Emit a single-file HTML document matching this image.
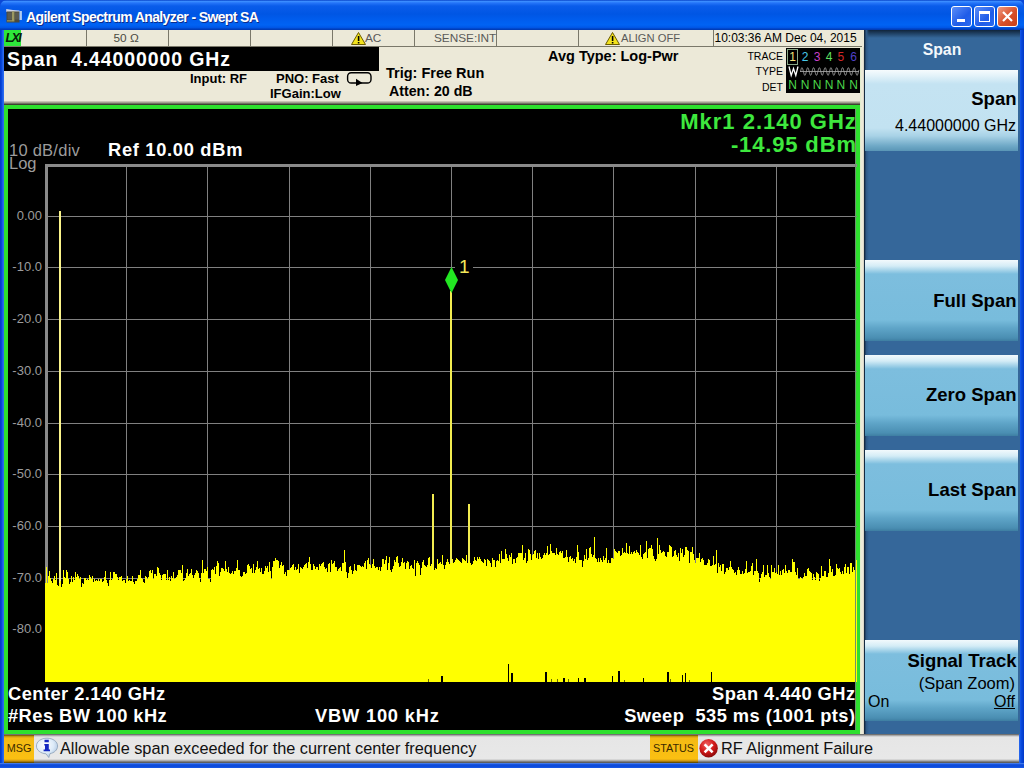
<!DOCTYPE html>
<html><head><meta charset="utf-8">
<style>
*{margin:0;padding:0;box-sizing:border-box}
html,body{width:1024px;height:768px;overflow:hidden;background:#0A47D6;font-family:"Liberation Sans", sans-serif}
.abs{position:absolute}
#title{left:0;top:0;width:1024px;height:30px;background:linear-gradient(#0843C8 0px,#3A8CFF 1.5px,#2474F8 3px,#0A5CEA 6px,#0056E4 14px,#005DEE 20px,#0063F4 25px,#0056E6 27.5px,#0040C0 29px,#0038B0 30px);border-radius:7px 7px 0 0}
#title .t{left:26px;top:9px;color:#fff;font-weight:bold;font-size:14px;letter-spacing:-0.62px;text-shadow:1px 1px 0 #0A2C8C;white-space:nowrap}
.wb{top:6px;width:21px;height:21px;border:1px solid #fff;border-radius:3px;background:linear-gradient(135deg,#5C8EF8,#1F5CE8 60%,#2A6AF0)}
#frameL{left:0;top:30px;width:4px;height:738px;background:linear-gradient(90deg,#0038C8,#0A4CE0 2px,#2A6AF0 3px)}
#frameR{left:1019px;top:30px;width:5px;height:738px;background:linear-gradient(90deg,#2A6AF0,#0A4CE0 2px,#0038C8)}
#frameB{left:0;top:763px;width:1024px;height:5px;background:linear-gradient(#6A9AF0,#1A56E0 1px,#0A48D8 3px,#1A5AE8)}
#beige{left:4px;top:30px;width:860px;height:74px;background:#ECE9D8}
#srow{left:4px;top:30px;width:860px;height:17px;background:#ECE9D8}
.dv{top:30px;width:1px;height:17px;background:#7A786A}
.st{top:31px;font-size:11.8px;color:#5A5A58;white-space:nowrap;line-height:15px}
#spanbox{left:4px;top:47px;width:375px;height:24px;background:#000;color:#fff;font-weight:bold;font-size:19.5px;letter-spacing:0.9px;line-height:24px;padding-left:3px;white-space:pre}
.bt{font-weight:bold;color:#000;white-space:nowrap;position:absolute;line-height:1}
#shadow{left:4px;top:100.5px;width:856px;height:4.5px;background:linear-gradient(#D8D4C4,#A8A596 35%,#5A5A4A 75%,#202818)}
#gframe{left:4px;top:105px;width:856px;height:629px;background:#000;border:4px solid #2EE02E}
#panel{left:864px;top:30px;width:156px;height:704px;background:#35679A}
#panelshade{left:864px;top:30px;width:156px;height:8px;background:linear-gradient(#10243A,#35679A)}
#panelL{left:864px;top:30px;width:5px;height:704px;background:linear-gradient(90deg,#0A1A2A,#1E3A5A 1px,#2E5A88 2.5px,rgba(53,103,154,0) 5px)}
.sk{left:865px;width:153px;height:81px;background:linear-gradient(#F2F9FC 0px,#D4ECF6 6px,#7DBEDE 14px,#78BCDC 60px,#5FA5C8 68px,#4A8EB2 78px,#3E7EA2 81px)}
.sk.sel{background:linear-gradient(#F6FBFD 0px,#E2F2F9 6px,#C4E3F2 14px,#C2E2F1 58px,#A8D2E6 66px,#6EA8C6 76px,#5A96B6 81px)}
.skt{position:absolute;right:1.5px;font-weight:bold;font-size:18.5px;color:#000;white-space:nowrap;line-height:1}
.yl{position:absolute;right:982px;font-size:13px;color:#9C9C9C;line-height:18px;white-space:nowrap}
.gt{position:absolute;font-weight:bold;color:#fff;font-size:18.3px;letter-spacing:0.45px;white-space:pre;line-height:1}
#sbar{left:4px;top:734px;width:1015px;height:29px;background:linear-gradient(#5A5A5A 0px,#8A8A8A 1px,#C8C8C8 2px,#E6E6E6 3.5px,#E8E8E8 25px,#B0B0B0 26.5px,#6A6A6A 28px,#505050 29px)}
.tag{position:absolute;background:linear-gradient(#5A4000 0px,#B88A10 1px,#F4BA14 3px,#FBC012 24px,#C89010 26px,#6A5000 27.5px);color:#3A2A00;font-size:10.8px;line-height:27px;text-align:center}
</style></head><body>
<div id="title" class="abs">
  <svg class="abs" style="left:0;top:0" width="30" height="30" viewBox="0 0 30 30">
    <path d="M6.2 9 L13 10 L19.5 10.5 L19.5 12 L6.2 12 Z" fill="#D0D4E4"/>
    <rect x="6.5" y="11.5" width="13" height="11" fill="#4C4A3C"/>
    <rect x="7.5" y="12.5" width="4.5" height="7" fill="#5A5A50"/>
    <rect x="15" y="12.5" width="4" height="7" fill="#5A5A50"/>
    <rect x="12" y="11.5" width="2.4" height="10" fill="#9C9860"/>
    <rect x="7" y="20" width="5" height="1.6" fill="#8A8658"/>
    <rect x="19.5" y="11" width="2.4" height="9" fill="#B0CCF0"/>
  </svg>
  <div class="abs t">Agilent Spectrum Analyzer - Swept SA</div>
  <div class="abs wb" style="left:951px"><div class="abs" style="left:5px;top:12px;width:8px;height:3px;background:#fff"></div></div>
  <div class="abs wb" style="left:974px"><div class="abs" style="left:4px;top:4px;width:11px;height:11px;border:1px solid #fff;border-top-width:3px"></div></div>
  <div class="abs wb" style="left:997px;background:linear-gradient(135deg,#F09A80,#D8502A 55%,#C84018)">
    <svg class="abs" style="left:3px;top:3px" width="13" height="13"><path d="M2 2 L11 11 M11 2 L2 11" stroke="#fff" stroke-width="2.2"/></svg>
  </div>
</div>
<div id="frameL" class="abs"></div><div id="frameR" class="abs"></div><div id="frameB" class="abs"></div>
<div id="beige" class="abs"></div>
<div id="srow" class="abs"></div>
<div class="abs" style="left:4px;top:30px;width:17px;height:16px;background:#2EE83A"></div>
<div class="abs" style="left:5.5px;top:31px;font-size:12.5px;font-weight:bold;font-style:italic;color:#082008;letter-spacing:-1.6px;line-height:15px">LXI</div>
<div class="abs" style="left:4px;top:46px;width:858px;height:1px;background:#7A786A"></div>
<div class="abs dv" style="left:86px"></div>
<div class="abs dv" style="left:168px"></div>
<div class="abs dv" style="left:250px"></div>
<div class="abs dv" style="left:332px"></div>
<div class="abs dv" style="left:414px"></div>
<div class="abs dv" style="left:496px"></div>
<div class="abs dv" style="left:578px"></div>
<div class="abs dv" style="left:713px"></div>
<div class="abs st" style="left:113.5px;color:#4A4A42">50 &#937;</div>
<svg class="abs" style="left:351px;top:32px" width="15" height="13" viewBox="0 0 15 13"><path d="M7.5 0.5 L14.5 12.5 L0.5 12.5 Z" fill="#F2E21C" stroke="#6A5A00"/><rect x="6.8" y="4" width="1.6" height="5" fill="#000"/><rect x="6.8" y="10" width="1.6" height="1.5" fill="#000"/></svg>
<div class="abs st" style="left:365px">AC</div>
<div class="abs st" style="left:434px">SENSE:INT</div>
<svg class="abs" style="left:605px;top:32px" width="15" height="13" viewBox="0 0 15 13"><path d="M7.5 0.5 L14.5 12.5 L0.5 12.5 Z" fill="#F2E21C" stroke="#6A5A00"/><rect x="6.8" y="4" width="1.6" height="5" fill="#000"/><rect x="6.8" y="10" width="1.6" height="1.5" fill="#000"/></svg>
<div class="abs st" style="left:621px;font-size:11.2px">ALIGN OFF</div>
<div class="abs st" style="left:714.5px;color:#000;font-size:12px;letter-spacing:0px">10:03:36 AM Dec 04, 2015</div>
<div id="spanbox" class="abs">Span  4.44000000 GHz</div>
<div class="bt" style="left:190px;top:72px;font-size:13px">Input: RF</div>
<div class="bt" style="left:276px;top:72px;font-size:13px">PNO: Fast</div>
<div class="bt" style="left:270px;top:87px;font-size:13px">IFGain:Low</div>
<svg class="abs" style="left:346px;top:71px" width="27" height="16" viewBox="0 0 27 16"><rect x="1.6" y="1.8" width="23.4" height="10.2" rx="3.6" fill="none" stroke="#000" stroke-width="1.4"/><path d="M10 7.8 L16.5 11.9 L10 15 Z" fill="#000"/></svg>
<div class="bt" style="left:386px;top:66px;font-size:14.5px">Trig: Free Run</div>
<div class="bt" style="left:389px;top:84px;font-size:14.2px">Atten: 20 dB</div>
<div class="bt" style="left:548px;top:49px;font-size:14.5px">Avg Type: Log-Pwr</div>
<div class="abs" style="left:733px;top:48.5px;width:50px;text-align:right;font-size:10.5px;line-height:15.7px;color:#000">TRACE<br>TYPE<br>DET</div>
<div class="abs" style="left:786px;top:48px;width:75px;height:45px;background:#000"></div>
<div class="abs" style="left:787px;top:49px;width:11px;height:16px;border:1px solid #8AA888"></div>
<div class="abs" style="left:789.2px;top:50px;font-size:12px;line-height:14px;color:#F4E27A">1</div><div class="abs" style="left:788.2px;top:78px;font-size:12px;line-height:14px;color:#4CD84C">N</div><div class="abs" style="left:801.7px;top:50px;font-size:12px;line-height:14px;color:#48C8E8">2</div><div class="abs" style="left:800.7px;top:78px;font-size:12px;line-height:14px;color:#4CD84C">N</div><div class="abs" style="left:813.8px;top:50px;font-size:12px;line-height:14px;color:#C840C8">3</div><div class="abs" style="left:812.8px;top:78px;font-size:12px;line-height:14px;color:#4CD84C">N</div><div class="abs" style="left:825.7px;top:50px;font-size:12px;line-height:14px;color:#60E060">4</div><div class="abs" style="left:824.7px;top:78px;font-size:12px;line-height:14px;color:#4CD84C">N</div><div class="abs" style="left:837.6px;top:50px;font-size:12px;line-height:14px;color:#D02828">5</div><div class="abs" style="left:836.6px;top:78px;font-size:12px;line-height:14px;color:#4CD84C">N</div><div class="abs" style="left:850.3px;top:50px;font-size:12px;line-height:14px;color:#5040C8">6</div><div class="abs" style="left:849.3px;top:78px;font-size:12px;line-height:14px;color:#4CD84C">N</div>
<svg class="abs" style="left:786px;top:64px" width="75" height="14" viewBox="0 0 75 14">
<path d="M3 2.5 L5.2 11.5 L7.5 4.5 L9.8 11.5 L12 2.5" stroke="#fff" fill="none" stroke-width="1.3"/>
<path d="M14 7.5 H73" stroke="#909090" stroke-width="1"/><path d="M14.5 7.5 L14.50 7.50 L14.60 7.09 L14.70 6.68 L14.80 6.29 L14.90 5.90 L15.00 5.54 L15.10 5.20 L15.20 4.89 L15.30 4.60 L15.40 4.35 L15.50 4.14 L15.60 3.97 L15.70 3.84 L15.80 3.75 L15.90 3.71 L16.00 3.71 L16.10 3.75 L16.20 3.84 L16.30 3.97 L16.40 4.14 L16.50 4.35 L16.60 4.60 L16.70 4.89 L16.80 5.20 L16.90 5.54 L17.00 5.90 L17.10 6.29 L17.20 6.68 L17.30 7.09 L17.40 7.50 L17.50 7.91 L17.60 8.32 L17.70 8.71 L17.80 9.10 L17.90 9.46 L18.00 9.80 L18.10 10.11 L18.20 10.40 L18.30 10.65 L18.40 10.86 L18.50 11.03 L18.60 11.16 L18.70 11.25 L18.80 11.29 L18.90 11.29 L19.00 11.25 L19.10 11.16 L19.20 11.03 L19.30 10.86 L19.40 10.65 L19.50 10.40 L19.60 10.11 L19.70 9.80 L19.80 9.46 L19.90 9.10 L20.00 8.71 L20.10 8.32 L20.20 7.91 L20.30 7.50 L20.40 7.09 L20.50 6.68 L20.60 6.29 L20.70 5.90 L20.80 5.54 L20.90 5.20 L21.00 4.89 L21.10 4.60 L21.20 4.35 L21.30 4.14 L21.40 3.97 L21.50 3.84 L21.60 3.75 L21.70 3.71 L21.80 3.71 L21.90 3.75 L22.00 3.84 L22.10 3.97 L22.20 4.14 L22.30 4.35 L22.40 4.60 L22.50 4.89 L22.60 5.20 L22.70 5.54 L22.80 5.90 L22.90 6.29 L23.00 6.68 L23.10 7.09 L23.20 7.50 L23.30 7.91 L23.40 8.32 L23.50 8.71 L23.60 9.10 L23.70 9.46 L23.80 9.80 L23.90 10.11 L24.00 10.40 L24.10 10.65 L24.20 10.86 L24.30 11.03 L24.40 11.16 L24.50 11.25 L24.60 11.29 L24.70 11.29 L24.80 11.25 L24.90 11.16 L25.00 11.03 L25.10 10.86 L25.20 10.65 L25.30 10.40 L25.40 10.11 L25.50 9.80 L25.60 9.46 L25.70 9.10 L25.80 8.71 L25.90 8.32 L26.00 7.91 L26.10 7.50 L26.20 7.09 L26.30 6.68 L26.40 6.29 L26.50 5.90 L26.60 5.54 L26.70 5.20 L26.80 4.89 L26.90 4.60 L27.00 4.35 L27.10 4.14 L27.20 3.97 L27.30 3.84 L27.40 3.75 L27.50 3.71 L27.60 3.71 L27.70 3.75 L27.80 3.84 L27.90 3.97 L28.00 4.14 L28.10 4.35 L28.20 4.60 L28.30 4.89 L28.40 5.20 L28.50 5.54 L28.60 5.90 L28.70 6.29 L28.80 6.68 L28.90 7.09 L29.00 7.50 L29.10 7.91 L29.20 8.32 L29.30 8.71 L29.40 9.10 L29.50 9.46 L29.60 9.80 L29.70 10.11 L29.80 10.40 L29.90 10.65 L30.00 10.86 L30.10 11.03 L30.20 11.16 L30.30 11.25 L30.40 11.29 L30.50 11.29 L30.60 11.25 L30.70 11.16 L30.80 11.03 L30.90 10.86 L31.00 10.65 L31.10 10.40 L31.20 10.11 L31.30 9.80 L31.40 9.46 L31.50 9.10 L31.60 8.71 L31.70 8.32 L31.80 7.91 L31.90 7.50 L32.00 7.09 L32.10 6.68 L32.20 6.29 L32.30 5.90 L32.40 5.54 L32.50 5.20 L32.60 4.89 L32.70 4.60 L32.80 4.35 L32.90 4.14 L33.00 3.97 L33.10 3.84 L33.20 3.75 L33.30 3.71 L33.40 3.71 L33.50 3.75 L33.60 3.84 L33.70 3.97 L33.80 4.14 L33.90 4.35 L34.00 4.60 L34.10 4.89 L34.20 5.20 L34.30 5.54 L34.40 5.90 L34.50 6.29 L34.60 6.68 L34.70 7.09 L34.80 7.50 L34.90 7.91 L35.00 8.32 L35.10 8.71 L35.20 9.10 L35.30 9.46 L35.40 9.80 L35.50 10.11 L35.60 10.40 L35.70 10.65 L35.80 10.86 L35.90 11.03 L36.00 11.16 L36.10 11.25 L36.20 11.29 L36.30 11.29 L36.40 11.25 L36.50 11.16 L36.60 11.03 L36.70 10.86 L36.80 10.65 L36.90 10.40 L37.00 10.11 L37.10 9.80 L37.20 9.46 L37.30 9.10 L37.40 8.71 L37.50 8.32 L37.60 7.91 L37.70 7.50 L37.80 7.09 L37.90 6.68 L38.00 6.29 L38.10 5.90 L38.20 5.54 L38.30 5.20 L38.40 4.89 L38.50 4.60 L38.60 4.35 L38.70 4.14 L38.80 3.97 L38.90 3.84 L39.00 3.75 L39.10 3.71 L39.20 3.71 L39.30 3.75 L39.40 3.84 L39.50 3.97 L39.60 4.14 L39.70 4.35 L39.80 4.60 L39.90 4.89 L40.00 5.20 L40.10 5.54 L40.20 5.90 L40.30 6.29 L40.40 6.68 L40.50 7.09 L40.60 7.50 L40.70 7.91 L40.80 8.32 L40.90 8.71 L41.00 9.10 L41.10 9.46 L41.20 9.80 L41.30 10.11 L41.40 10.40 L41.50 10.65 L41.60 10.86 L41.70 11.03 L41.80 11.16 L41.90 11.25 L42.00 11.29 L42.10 11.29 L42.20 11.25 L42.30 11.16 L42.40 11.03 L42.50 10.86 L42.60 10.65 L42.70 10.40 L42.80 10.11 L42.90 9.80 L43.00 9.46 L43.10 9.10 L43.20 8.71 L43.30 8.32 L43.40 7.91 L43.50 7.50 L43.60 7.09 L43.70 6.68 L43.80 6.29 L43.90 5.90 L44.00 5.54 L44.10 5.20 L44.20 4.89 L44.30 4.60 L44.40 4.35 L44.50 4.14 L44.60 3.97 L44.70 3.84 L44.80 3.75 L44.90 3.71 L45.00 3.71 L45.10 3.75 L45.20 3.84 L45.30 3.97 L45.40 4.14 L45.50 4.35 L45.60 4.60 L45.70 4.89 L45.80 5.20 L45.90 5.54 L46.00 5.90 L46.10 6.29 L46.20 6.68 L46.30 7.09 L46.40 7.50 L46.50 7.91 L46.60 8.32 L46.70 8.71 L46.80 9.10 L46.90 9.46 L47.00 9.80 L47.10 10.11 L47.20 10.40 L47.30 10.65 L47.40 10.86 L47.50 11.03 L47.60 11.16 L47.70 11.25 L47.80 11.29 L47.90 11.29 L48.00 11.25 L48.10 11.16 L48.20 11.03 L48.30 10.86 L48.40 10.65 L48.50 10.40 L48.60 10.11 L48.70 9.80 L48.80 9.46 L48.90 9.10 L49.00 8.71 L49.10 8.32 L49.20 7.91 L49.30 7.50 L49.40 7.09 L49.50 6.68 L49.60 6.29 L49.70 5.90 L49.80 5.54 L49.90 5.20 L50.00 4.89 L50.10 4.60 L50.20 4.35 L50.30 4.14 L50.40 3.97 L50.50 3.84 L50.60 3.75 L50.70 3.71 L50.80 3.71 L50.90 3.75 L51.00 3.84 L51.10 3.97 L51.20 4.14 L51.30 4.35 L51.40 4.60 L51.50 4.89 L51.60 5.20 L51.70 5.54 L51.80 5.90 L51.90 6.29 L52.00 6.68 L52.10 7.09 L52.20 7.50 L52.30 7.91 L52.40 8.32 L52.50 8.71 L52.60 9.10 L52.70 9.46 L52.80 9.80 L52.90 10.11 L53.00 10.40 L53.10 10.65 L53.20 10.86 L53.30 11.03 L53.40 11.16 L53.50 11.25 L53.60 11.29 L53.70 11.29 L53.80 11.25 L53.90 11.16 L54.00 11.03 L54.10 10.86 L54.20 10.65 L54.30 10.40 L54.40 10.11 L54.50 9.80 L54.60 9.46 L54.70 9.10 L54.80 8.71 L54.90 8.32 L55.00 7.91 L55.10 7.50 L55.20 7.09 L55.30 6.68 L55.40 6.29 L55.50 5.90 L55.60 5.54 L55.70 5.20 L55.80 4.89 L55.90 4.60 L56.00 4.35 L56.10 4.14 L56.20 3.97 L56.30 3.84 L56.40 3.75 L56.50 3.71 L56.60 3.71 L56.70 3.75 L56.80 3.84 L56.90 3.97 L57.00 4.14 L57.10 4.35 L57.20 4.60 L57.30 4.89 L57.40 5.20 L57.50 5.54 L57.60 5.90 L57.70 6.29 L57.80 6.68 L57.90 7.09 L58.00 7.50 L58.10 7.91 L58.20 8.32 L58.30 8.71 L58.40 9.10 L58.50 9.46 L58.60 9.80 L58.70 10.11 L58.80 10.40 L58.90 10.65 L59.00 10.86 L59.10 11.03 L59.20 11.16 L59.30 11.25 L59.40 11.29 L59.50 11.29 L59.60 11.25 L59.70 11.16 L59.80 11.03 L59.90 10.86 L60.00 10.65 L60.10 10.40 L60.20 10.11 L60.30 9.80 L60.40 9.46 L60.50 9.10 L60.60 8.71 L60.70 8.32 L60.80 7.91 L60.90 7.50 L61.00 7.09 L61.10 6.68 L61.20 6.29 L61.30 5.90 L61.40 5.54 L61.50 5.20 L61.60 4.89 L61.70 4.60 L61.80 4.35 L61.90 4.14 L62.00 3.97 L62.10 3.84 L62.20 3.75 L62.30 3.71 L62.40 3.71 L62.50 3.75 L62.60 3.84 L62.70 3.97 L62.80 4.14 L62.90 4.35 L63.00 4.60 L63.10 4.89 L63.20 5.20 L63.30 5.54 L63.40 5.90 L63.50 6.29 L63.60 6.68 L63.70 7.09 L63.80 7.50 L63.90 7.91 L64.00 8.32 L64.10 8.71 L64.20 9.10 L64.30 9.46 L64.40 9.80 L64.50 10.11 L64.60 10.40 L64.70 10.65 L64.80 10.86 L64.90 11.03 L65.00 11.16 L65.10 11.25 L65.20 11.29 L65.30 11.29 L65.40 11.25 L65.50 11.16 L65.60 11.03 L65.70 10.86 L65.80 10.65 L65.90 10.40 L66.00 10.11 L66.10 9.80 L66.20 9.46 L66.30 9.10 L66.40 8.71 L66.50 8.32 L66.60 7.91 L66.70 7.50 L66.80 7.09 L66.90 6.68 L67.00 6.29 L67.10 5.90 L67.20 5.54 L67.30 5.20 L67.40 4.89 L67.50 4.60 L67.60 4.35 L67.70 4.14 L67.80 3.97 L67.90 3.84 L68.00 3.75 L68.10 3.71 L68.20 3.71 L68.30 3.75 L68.40 3.84 L68.50 3.97 L68.60 4.14 L68.70 4.35 L68.80 4.60 L68.90 4.89 L69.00 5.20 L69.10 5.54 L69.20 5.90 L69.30 6.29 L69.40 6.68 L69.50 7.09 L69.60 7.50 L69.70 7.91 L69.80 8.32 L69.90 8.71 L70.00 9.10 L70.10 9.46 L70.20 9.80 L70.30 10.11 L70.40 10.40 L70.50 10.65 L70.60 10.86 L70.70 11.03 L70.80 11.16 L70.90 11.25 L71.00 11.29 L71.10 11.29 L71.20 11.25 L71.30 11.16 L71.40 11.03 L71.50 10.86 L71.60 10.65 L71.70 10.40 L71.80 10.11 L71.90 9.80 L72.00 9.46 L72.10 9.10 L72.20 8.71 L72.30 8.32 L72.40 7.91 L72.50 7.50 L72.60 7.09 L72.70 6.68 L72.80 6.29 L72.90 5.90 " stroke="#A8A8A8" fill="none" stroke-width="1"/>
</svg>
<div id="shadow" class="abs"></div>
<div id="gframe" class="abs"></div>
<svg class="abs" style="left:0;top:0" width="1024" height="768">
  <g fill="#808080"><rect x="126" y="165" width="1" height="517"/>
<rect x="207" y="165" width="1" height="517"/>
<rect x="289" y="165" width="1" height="517"/>
<rect x="370" y="165" width="1" height="517"/>
<rect x="451" y="165" width="1" height="517"/>
<rect x="532" y="165" width="1" height="517"/>
<rect x="613" y="165" width="1" height="517"/>
<rect x="695" y="165" width="1" height="517"/>
<rect x="776" y="165" width="1" height="517"/>
<rect x="45" y="216" width="812" height="1"/>
<rect x="45" y="267" width="812" height="1"/>
<rect x="45" y="319" width="812" height="1"/>
<rect x="45" y="371" width="812" height="1"/>
<rect x="45" y="423" width="812" height="1"/>
<rect x="45" y="474" width="812" height="1"/>
<rect x="45" y="526" width="812" height="1"/>
<rect x="45" y="578" width="812" height="1"/>
<rect x="45" y="629" width="812" height="1"/></g>
  <rect x="45" y="164" width="812" height="3" fill="#8A8A8A"/>
  <rect x="45" y="164" width="3" height="518" fill="#8A8A8A"/>
  <rect x="59" y="211" width="2" height="471" fill="#FAF48A"/>
  <rect x="432" y="494" width="2" height="80" fill="#F2EC50"/>
  <rect x="468" y="504" width="2" height="70" fill="#F2EC50"/>
  <rect x="450" y="291" width="2" height="290" fill="#F2EC50"/>
  <path d="M45,682 L45,583 L46,583 L46,567 L47,567 L47,583 L48,583 L48,576 L49,576 L49,571 L50,571 L50,578 L51,578 L51,581 L52,581 L52,583 L53,583 L53,579 L54,579 L54,576 L55,576 L55,580 L56,580 L56,573 L57,573 L57,585 L58,585 L58,586 L59,586 L59,583 L60,583 L60,581 L61,581 L61,587 L62,587 L62,584 L63,584 L63,570 L64,570 L64,577 L65,577 L65,578 L66,578 L66,570 L67,570 L67,572 L68,572 L68,579 L69,579 L69,584 L70,584 L70,582 L71,582 L71,576 L72,576 L72,582 L73,582 L73,577 L74,577 L74,580 L75,580 L75,572 L76,572 L76,577 L77,577 L77,574 L78,574 L78,576 L79,576 L79,579 L80,579 L80,577 L81,577 L81,587 L82,587 L82,583 L83,583 L83,584 L84,584 L84,578 L85,578 L85,578 L86,578 L86,580 L87,580 L87,579 L88,579 L88,580 L89,580 L89,575 L90,575 L90,577 L91,577 L91,579 L92,579 L92,576 L93,576 L93,582 L94,582 L94,579 L95,579 L95,581 L96,581 L96,580 L97,580 L97,581 L98,581 L98,579 L99,579 L99,581 L100,581 L100,579 L101,579 L101,579 L102,579 L102,582 L103,582 L103,581 L104,581 L104,577 L105,577 L105,571 L106,571 L106,580 L107,580 L107,583 L108,583 L108,586 L109,586 L109,580 L110,580 L110,572 L111,572 L111,580 L112,580 L112,579 L113,579 L113,572 L114,572 L114,572 L115,572 L115,574 L116,574 L116,574 L117,574 L117,577 L118,577 L118,580 L119,580 L119,577 L120,577 L120,577 L121,577 L121,576 L122,576 L122,581 L123,581 L123,580 L124,580 L124,580 L125,580 L125,583 L126,583 L126,579 L127,579 L127,576 L128,576 L128,581 L129,581 L129,580 L130,580 L130,581 L131,581 L131,581 L132,581 L132,576 L133,576 L133,582 L134,582 L134,584 L135,584 L135,581 L136,581 L136,581 L137,581 L137,579 L138,579 L138,575 L139,575 L139,575 L140,575 L140,570 L141,570 L141,578 L142,578 L142,579 L143,579 L143,582 L144,582 L144,583 L145,583 L145,576 L146,576 L146,577 L147,577 L147,579 L148,579 L148,577 L149,577 L149,571 L150,571 L150,570 L151,570 L151,573 L152,573 L152,570 L153,570 L153,579 L154,579 L154,574 L155,574 L155,574 L156,574 L156,576 L157,576 L157,567 L158,567 L158,568 L159,568 L159,573 L160,573 L160,575 L161,575 L161,580 L162,580 L162,575 L163,575 L163,574 L164,574 L164,574 L165,574 L165,574 L166,574 L166,580 L167,580 L167,570 L168,570 L168,580 L169,580 L169,577 L170,577 L170,581 L171,581 L171,576 L172,576 L172,578 L173,578 L173,572 L174,572 L174,579 L175,579 L175,578 L176,578 L176,577 L177,577 L177,575 L178,575 L178,570 L179,570 L179,570 L180,570 L180,570 L181,570 L181,573 L182,573 L182,565 L183,565 L183,581 L184,581 L184,580 L185,580 L185,578 L186,578 L186,573 L187,573 L187,569 L188,569 L188,576 L189,576 L189,574 L190,574 L190,573 L191,573 L191,569 L192,569 L192,575 L193,575 L193,578 L194,578 L194,575 L195,575 L195,573 L196,573 L196,570 L197,570 L197,571 L198,571 L198,573 L199,573 L199,578 L200,578 L200,582 L201,582 L201,573 L202,573 L202,560 L203,560 L203,573 L204,573 L204,569 L205,569 L205,569 L206,569 L206,571 L207,571 L207,567 L208,567 L208,579 L209,579 L209,579 L210,579 L210,582 L211,582 L211,570 L212,570 L212,569 L213,569 L213,570 L214,570 L214,567 L215,567 L215,574 L216,574 L216,566 L217,566 L217,561 L218,561 L218,563 L219,563 L219,576 L220,576 L220,572 L221,572 L221,568 L222,568 L222,568 L223,568 L223,569 L224,569 L224,571 L225,571 L225,561 L226,561 L226,569 L227,569 L227,572 L228,572 L228,567 L229,567 L229,573 L230,573 L230,574 L231,574 L231,573 L232,573 L232,571 L233,571 L233,574 L234,574 L234,571 L235,571 L235,571 L236,571 L236,568 L237,568 L237,560 L238,560 L238,570 L239,570 L239,570 L240,570 L240,576 L241,576 L241,577 L242,577 L242,576 L243,576 L243,572 L244,572 L244,572 L245,572 L245,574 L246,574 L246,573 L247,573 L247,565 L248,565 L248,564 L249,564 L249,566 L250,566 L250,569 L251,569 L251,568 L252,568 L252,573 L253,573 L253,564 L254,564 L254,573 L255,573 L255,570 L256,570 L256,567 L257,567 L257,561 L258,561 L258,569 L259,569 L259,568 L260,568 L260,572 L261,572 L261,568 L262,568 L262,574 L263,574 L263,574 L264,574 L264,571 L265,571 L265,566 L266,566 L266,568 L267,568 L267,566 L268,566 L268,572 L269,572 L269,562 L270,562 L270,571 L271,571 L271,579 L272,579 L272,567 L273,567 L273,561 L274,561 L274,561 L275,561 L275,558 L276,558 L276,560 L277,560 L277,560 L278,560 L278,561 L279,561 L279,568 L280,568 L280,565 L281,565 L281,562 L282,562 L282,566 L283,566 L283,565 L284,565 L284,574 L285,574 L285,572 L286,572 L286,576 L287,576 L287,570 L288,570 L288,570 L289,570 L289,570 L290,570 L290,568 L291,568 L291,567 L292,567 L292,565 L293,565 L293,564 L294,564 L294,570 L295,570 L295,567 L296,567 L296,570 L297,570 L297,569 L298,569 L298,564 L299,564 L299,573 L300,573 L300,567 L301,567 L301,568 L302,568 L302,569 L303,569 L303,567 L304,567 L304,565 L305,565 L305,564 L306,564 L306,563 L307,563 L307,568 L308,568 L308,562 L309,562 L309,557 L310,557 L310,564 L311,564 L311,570 L312,570 L312,570 L313,570 L313,564 L314,564 L314,566 L315,566 L315,569 L316,569 L316,567 L317,567 L317,567 L318,567 L318,570 L319,570 L319,564 L320,564 L320,566 L321,566 L321,564 L322,564 L322,563 L323,563 L323,562 L324,562 L324,567 L325,567 L325,569 L326,569 L326,568 L327,568 L327,572 L328,572 L328,564 L329,564 L329,563 L330,563 L330,572 L331,572 L331,560 L332,560 L332,564 L333,564 L333,563 L334,563 L334,561 L335,561 L335,567 L336,567 L336,567 L337,567 L337,571 L338,571 L338,569 L339,569 L339,568 L340,568 L340,567 L341,567 L341,571 L342,571 L342,563 L343,563 L343,563 L344,563 L344,550 L345,550 L345,562 L346,562 L346,572 L347,572 L347,578 L348,578 L348,573 L349,573 L349,567 L350,567 L350,566 L351,566 L351,570 L352,570 L352,574 L353,574 L353,571 L354,571 L354,564 L355,564 L355,570 L356,570 L356,571 L357,571 L357,565 L358,565 L358,565 L359,565 L359,565 L360,565 L360,566 L361,566 L361,567 L362,567 L362,566 L363,566 L363,567 L364,567 L364,563 L365,563 L365,561 L366,561 L366,569 L367,569 L367,560 L368,560 L368,558 L369,558 L369,564 L370,564 L370,565 L371,565 L371,568 L372,568 L372,564 L373,564 L373,559 L374,559 L374,566 L375,566 L375,568 L376,568 L376,567 L377,567 L377,567 L378,567 L378,570 L379,570 L379,567 L380,567 L380,571 L381,571 L381,567 L382,567 L382,559 L383,559 L383,559 L384,559 L384,564 L385,564 L385,560 L386,560 L386,556 L387,556 L387,570 L388,570 L388,563 L389,563 L389,557 L390,557 L390,570 L391,570 L391,572 L392,572 L392,569 L393,569 L393,566 L394,566 L394,560 L395,560 L395,562 L396,562 L396,557 L397,557 L397,556 L398,556 L398,563 L399,563 L399,567 L400,567 L400,566 L401,566 L401,562 L402,562 L402,558 L403,558 L403,563 L404,563 L404,562 L405,562 L405,569 L406,569 L406,563 L407,563 L407,561 L408,561 L408,562 L409,562 L409,569 L410,569 L410,566 L411,566 L411,565 L412,565 L412,568 L413,568 L413,569 L414,569 L414,560 L415,560 L415,576 L416,576 L416,563 L417,563 L417,561 L418,561 L418,563 L419,563 L419,565 L420,565 L420,575 L421,575 L421,568 L422,568 L422,562 L423,562 L423,560 L424,560 L424,565 L425,565 L425,566 L426,566 L426,567 L427,567 L427,565 L428,565 L428,558 L429,558 L429,557 L430,557 L430,566 L431,566 L431,564 L432,564 L432,570 L433,570 L433,560 L434,560 L434,570 L435,570 L435,568 L436,568 L436,569 L437,569 L437,559 L438,559 L438,564 L439,564 L439,563 L440,563 L440,562 L441,562 L441,564 L442,564 L442,555 L443,555 L443,565 L444,565 L444,569 L445,569 L445,565 L446,565 L446,562 L447,562 L447,559 L448,559 L448,562 L449,562 L449,564 L450,564 L450,563 L451,563 L451,563 L452,563 L452,559 L453,559 L453,563 L454,563 L454,562 L455,562 L455,560 L456,560 L456,558 L457,558 L457,559 L458,559 L458,560 L459,560 L459,561 L460,561 L460,562 L461,562 L461,563 L462,563 L462,558 L463,558 L463,559 L464,559 L464,560 L465,560 L465,561 L466,561 L466,555 L467,555 L467,563 L468,563 L468,562 L469,562 L469,560 L470,560 L470,563 L471,563 L471,565 L472,565 L472,564 L473,564 L473,561 L474,561 L474,557 L475,557 L475,560 L476,560 L476,561 L477,561 L477,557 L478,557 L478,559 L479,559 L479,557 L480,557 L480,559 L481,559 L481,561 L482,561 L482,562 L483,562 L483,563 L484,563 L484,559 L485,559 L485,560 L486,560 L486,566 L487,566 L487,559 L488,559 L488,560 L489,560 L489,561 L490,561 L490,563 L491,563 L491,567 L492,567 L492,558 L493,558 L493,560 L494,560 L494,560 L495,560 L495,567 L496,567 L496,561 L497,561 L497,560 L498,560 L498,561 L499,561 L499,554 L500,554 L500,563 L501,563 L501,551 L502,551 L502,559 L503,559 L503,559 L504,559 L504,559 L505,559 L505,549 L506,549 L506,554 L507,554 L507,558 L508,558 L508,561 L509,561 L509,555 L510,555 L510,557 L511,557 L511,553 L512,553 L512,564 L513,564 L513,559 L514,559 L514,559 L515,559 L515,563 L516,563 L516,558 L517,558 L517,557 L518,557 L518,553 L519,553 L519,553 L520,553 L520,553 L521,553 L521,553 L522,553 L522,545 L523,545 L523,560 L524,560 L524,558 L525,558 L525,553 L526,553 L526,563 L527,563 L527,561 L528,561 L528,549 L529,549 L529,550 L530,550 L530,554 L531,554 L531,560 L532,560 L532,555 L533,555 L533,554 L534,554 L534,551 L535,551 L535,550 L536,550 L536,558 L537,558 L537,553 L538,553 L538,559 L539,559 L539,553 L540,553 L540,557 L541,557 L541,559 L542,559 L542,558 L543,558 L543,555 L544,555 L544,553 L545,553 L545,555 L546,555 L546,553 L547,553 L547,546 L548,546 L548,555 L549,555 L549,554 L550,554 L550,544 L551,544 L551,551 L552,551 L552,553 L553,553 L553,553 L554,553 L554,553 L555,553 L555,555 L556,555 L556,548 L557,548 L557,554 L558,554 L558,555 L559,555 L559,552 L560,552 L560,551 L561,551 L561,553 L562,553 L562,551 L563,551 L563,558 L564,558 L564,558 L565,558 L565,557 L566,557 L566,550 L567,550 L567,557 L568,557 L568,562 L569,562 L569,557 L570,557 L570,556 L571,556 L571,559 L572,559 L572,558 L573,558 L573,561 L574,561 L574,559 L575,559 L575,563 L576,563 L576,557 L577,557 L577,545 L578,545 L578,552 L579,552 L579,560 L580,560 L580,560 L581,560 L581,560 L582,560 L582,567 L583,567 L583,561 L584,561 L584,555 L585,555 L585,559 L586,559 L586,549 L587,549 L587,560 L588,560 L588,558 L589,558 L589,548 L590,548 L590,547 L591,547 L591,554 L592,554 L592,557 L593,557 L593,555 L594,555 L594,537 L595,537 L595,558 L596,558 L596,559 L597,559 L597,562 L598,562 L598,558 L599,558 L599,562 L600,562 L600,558 L601,558 L601,560 L602,560 L602,562 L603,562 L603,556 L604,556 L604,560 L605,560 L605,558 L606,558 L606,548 L607,548 L607,563 L608,563 L608,560 L609,560 L609,563 L610,563 L610,563 L611,563 L611,558 L612,558 L612,558 L613,558 L613,559 L614,559 L614,549 L615,549 L615,551 L616,551 L616,552 L617,552 L617,553 L618,553 L618,551 L619,551 L619,551 L620,551 L620,556 L621,556 L621,555 L622,555 L622,548 L623,548 L623,553 L624,553 L624,552 L625,552 L625,553 L626,553 L626,543 L627,543 L627,553 L628,553 L628,554 L629,554 L629,546 L630,546 L630,554 L631,554 L631,552 L632,552 L632,554 L633,554 L633,552 L634,552 L634,551 L635,551 L635,553 L636,553 L636,550 L637,550 L637,552 L638,552 L638,553 L639,553 L639,555 L640,555 L640,545 L641,545 L641,557 L642,557 L642,559 L643,559 L643,554 L644,554 L644,553 L645,553 L645,552 L646,552 L646,541 L647,541 L647,558 L648,558 L648,549 L649,549 L649,548 L650,548 L650,548 L651,548 L651,545 L652,545 L652,549 L653,549 L653,556 L654,556 L654,559 L655,559 L655,561 L656,561 L656,559 L657,559 L657,538 L658,538 L658,554 L659,554 L659,545 L660,545 L660,550 L661,550 L661,553 L662,553 L662,552 L663,552 L663,551 L664,551 L664,552 L665,552 L665,556 L666,556 L666,557 L667,557 L667,552 L668,552 L668,552 L669,552 L669,545 L670,545 L670,546 L671,546 L671,547 L672,547 L672,557 L673,557 L673,556 L674,556 L674,551 L675,551 L675,550 L676,550 L676,555 L677,555 L677,557 L678,557 L678,553 L679,553 L679,561 L680,561 L680,548 L681,548 L681,553 L682,553 L682,549 L683,549 L683,557 L684,557 L684,555 L685,555 L685,547 L686,547 L686,547 L687,547 L687,550 L688,550 L688,551 L689,551 L689,563 L690,563 L690,552 L691,552 L691,552 L692,552 L692,547 L693,547 L693,554 L694,554 L694,560 L695,560 L695,563 L696,563 L696,558 L697,558 L697,558 L698,558 L698,558 L699,558 L699,553 L700,553 L700,562 L701,562 L701,559 L702,559 L702,558 L703,558 L703,560 L704,560 L704,565 L705,565 L705,565 L706,565 L706,565 L707,565 L707,563 L708,563 L708,559 L709,559 L709,560 L710,560 L710,566 L711,566 L711,566 L712,566 L712,565 L713,565 L713,556 L714,556 L714,565 L715,565 L715,564 L716,564 L716,550 L717,550 L717,573 L718,573 L718,563 L719,563 L719,567 L720,567 L720,565 L721,565 L721,571 L722,571 L722,564 L723,564 L723,564 L724,564 L724,574 L725,574 L725,572 L726,572 L726,568 L727,568 L727,568 L728,568 L728,570 L729,570 L729,567 L730,567 L730,561 L731,561 L731,567 L732,567 L732,569 L733,569 L733,570 L734,570 L734,573 L735,573 L735,572 L736,572 L736,575 L737,575 L737,570 L738,570 L738,567 L739,567 L739,570 L740,570 L740,574 L741,574 L741,574 L742,574 L742,571 L743,571 L743,574 L744,574 L744,573 L745,573 L745,569 L746,569 L746,561 L747,561 L747,573 L748,573 L748,572 L749,572 L749,572 L750,572 L750,571 L751,571 L751,566 L752,566 L752,563 L753,563 L753,575 L754,575 L754,571 L755,571 L755,571 L756,571 L756,559 L757,559 L757,571 L758,571 L758,573 L759,573 L759,582 L760,582 L760,578 L761,578 L761,574 L762,574 L762,572 L763,572 L763,565 L764,565 L764,577 L765,577 L765,575 L766,575 L766,575 L767,575 L767,565 L768,565 L768,573 L769,573 L769,577 L770,577 L770,579 L771,579 L771,565 L772,565 L772,572 L773,572 L773,572 L774,572 L774,568 L775,568 L775,573 L776,573 L776,572 L777,572 L777,574 L778,574 L778,565 L779,565 L779,575 L780,575 L780,571 L781,571 L781,575 L782,575 L782,570 L783,570 L783,569 L784,569 L784,573 L785,573 L785,565 L786,565 L786,571 L787,571 L787,573 L788,573 L788,570 L789,570 L789,570 L790,570 L790,572 L791,572 L791,572 L792,572 L792,559 L793,559 L793,562 L794,562 L794,562 L795,562 L795,572 L796,572 L796,575 L797,575 L797,568 L798,568 L798,579 L799,579 L799,579 L800,579 L800,577 L801,577 L801,578 L802,578 L802,579 L803,579 L803,577 L804,577 L804,573 L805,573 L805,576 L806,576 L806,576 L807,576 L807,569 L808,569 L808,568 L809,568 L809,571 L810,571 L810,572 L811,572 L811,573 L812,573 L812,580 L813,580 L813,574 L814,574 L814,577 L815,577 L815,580 L816,580 L816,572 L817,572 L817,573 L818,573 L818,574 L819,574 L819,581 L820,581 L820,578 L821,578 L821,566 L822,566 L822,576 L823,576 L823,576 L824,576 L824,571 L825,571 L825,571 L826,571 L826,577 L827,577 L827,577 L828,577 L828,573 L829,573 L829,559 L830,559 L830,566 L831,566 L831,572 L832,572 L832,569 L833,569 L833,576 L834,576 L834,576 L835,576 L835,575 L836,575 L836,564 L837,564 L837,568 L838,568 L838,569 L839,569 L839,568 L840,568 L840,572 L841,572 L841,574 L842,574 L842,571 L843,571 L843,574 L844,574 L844,567 L845,567 L845,564 L846,564 L846,573 L847,573 L847,567 L848,567 L848,567 L849,567 L849,574 L850,574 L850,563 L851,563 L851,563 L852,563 L852,572 L853,572 L853,567 L854,567 L854,570 L855,570 L855,564 L856,564 L856,560 L857,560 L857,682 Z" fill="#FFFF00" shape-rendering="crispEdges"/>
  <rect x="428" y="679" width="1" height="3" fill="#6A6A00"/><rect x="441" y="676" width="2" height="6" fill="#000"/><rect x="508" y="664" width="1" height="18" fill="#000"/><rect x="511" y="673" width="2" height="9" fill="#000"/><rect x="545" y="672" width="2" height="10" fill="#000"/><rect x="551" y="679" width="1" height="3" fill="#6A6A00"/><rect x="557" y="679" width="1" height="3" fill="#6A6A00"/><rect x="563" y="678" width="2" height="4" fill="#000"/><rect x="568" y="679" width="1" height="3" fill="#6A6A00"/><rect x="578" y="678" width="1" height="4" fill="#000"/><rect x="584" y="678" width="2" height="4" fill="#000"/><rect x="612" y="676" width="1" height="6" fill="#000"/><rect x="618" y="671" width="2" height="11" fill="#000"/><rect x="624" y="680" width="1" height="2" fill="#6A6A00"/><rect x="643" y="678" width="1" height="4" fill="#000"/><rect x="667" y="672" width="2" height="10" fill="#000"/><rect x="670" y="679" width="1" height="3" fill="#6A6A00"/><rect x="682" y="675" width="1" height="7" fill="#000"/><rect x="685" y="673" width="1" height="9" fill="#000"/><rect x="689" y="680" width="1" height="2" fill="#6A6A00"/><rect x="711" y="672" width="1" height="10" fill="#000"/>
  <rect x="455" y="258" width="18" height="18" fill="#000"/>
  <path d="M451.5 267 L458 280 L451.5 293 L445 280 Z" fill="#22E622"/>
</svg>
<div class="abs" style="left:459px;top:257px;font-size:19px;color:#F2E85A;line-height:1">1</div>
<div class="yl" style="top:206.5px">0.00</div><div class="yl" style="top:257.5px">-10.0</div><div class="yl" style="top:309.5px">-20.0</div><div class="yl" style="top:361.5px">-30.0</div><div class="yl" style="top:413.5px">-40.0</div><div class="yl" style="top:464.5px">-50.0</div><div class="yl" style="top:516.5px">-60.0</div><div class="yl" style="top:568.5px">-70.0</div><div class="yl" style="top:619.5px">-80.0</div>
<div class="abs" style="left:9px;top:142px;font-size:16.5px;letter-spacing:0.25px;color:#9C9C9C;line-height:1">10 dB/div</div>
<div class="abs" style="left:9px;top:155px;font-size:16.5px;color:#9C9C9C;line-height:1">Log</div>
<div class="gt" style="left:108px;top:141px;letter-spacing:0.7px">Ref 10.00 dBm</div>
<div class="gt" style="right:167.2px;top:111px;color:#3EE83E;font-size:22px;letter-spacing:1px;text-align:right">Mkr1 2.140 GHz</div>
<div class="gt" style="right:167.2px;top:134px;color:#3EE83E;font-size:22px;letter-spacing:0.85px;text-align:right">-14.95 dBm</div>
<div class="gt" style="left:8px;top:685px">Center 2.140 GHz</div>
<div class="gt" style="left:8px;top:707px">#Res BW 100 kHz</div>
<div class="gt" style="left:315px;top:707px;letter-spacing:0.8px">VBW 100 kHz</div>
<div class="gt" style="right:168.5px;top:685px">Span 4.440 GHz</div>
<div class="gt" style="right:168.5px;top:707px">Sweep  535 ms (1001 pts)</div>
<div class="abs" style="left:860px;top:47px;width:4px;height:687px;background:linear-gradient(90deg,#D8F0C8,#ECEBD8 1px,#ECE9D8 3px,#C8C4B8 4px)"></div>
<div class="abs" style="left:855px;top:109px;width:1px;height:621px;background:#709070"></div>
<div id="panel" class="abs"></div>
<div id="panelshade" class="abs"></div>
<div id="panelL" class="abs"></div>
<div class="abs" style="left:864px;top:41px;width:156px;text-align:center;color:#F4F8FC;font-size:15.8px;font-weight:bold;line-height:18px">Span</div>
<div class="abs sk sel" style="top:70px"><div class="skt" style="top:19.5px">Span</div><div class="abs" style="right:2px;top:48px;font-size:16px;line-height:1;color:#000;white-space:nowrap">4.44000000 GHz</div></div>
<div class="abs sk" style="top:260px"><div class="skt" style="top:32px">Full Span</div></div>
<div class="abs sk" style="top:355px"><div class="skt" style="top:31px">Zero Span</div></div>
<div class="abs sk" style="top:450px"><div class="skt" style="top:31px">Last Span</div></div>
<div class="abs sk" style="top:640px"><div class="skt" style="top:12px">Signal Track</div>
  <div class="abs" style="right:3px;top:35px;font-size:16.5px;line-height:1;color:#000">(Span Zoom)</div>
  <div class="abs" style="left:3px;top:54px;font-size:16px;line-height:1;color:#000">On</div>
  <div class="abs" style="right:3px;top:54px;font-size:16px;line-height:1;color:#000;text-decoration:underline">Off</div>
</div>
<div id="sbar" class="abs"></div>
<div class="tag" style="left:4px;top:735px;width:30px;height:27.5px">MSG</div>
<svg class="abs" style="left:35px;top:737px" width="24" height="22" viewBox="0 0 24 22">
<defs><radialGradient id="ib" cx="0.4" cy="0.35" r="0.7"><stop offset="0" stop-color="#FFFFFF"/><stop offset="0.6" stop-color="#DCEAF8"/><stop offset="1" stop-color="#A8C0DC"/></radialGradient>
<radialGradient id="rx" cx="0.4" cy="0.3" r="0.75"><stop offset="0" stop-color="#F06060"/><stop offset="0.55" stop-color="#D01818"/><stop offset="1" stop-color="#800808"/></radialGradient></defs>
<path d="M12 1.2 C18 1.2 22.6 4.6 22.6 9 C22.6 13 19 16 15 16.6 L13.8 20.5 L11 16.8 C5.6 16.4 1.4 13.2 1.4 9 C1.4 4.6 6 1.2 12 1.2 Z" fill="url(#ib)" stroke="#8AA0B8" stroke-width="0.8"/>
<path d="M9.5 2.8 H13.8 V5.2 H9.5 Z M9.3 7 H13.8 V12.6 H15 V14.3 H8.6 V12.6 H10 V8.6 H9.3 Z" fill="#1428C0"/>
</svg>
<div class="abs" style="left:60px;top:739px;font-size:16.3px;line-height:18px;color:#111;white-space:nowrap">Allowable span exceeded for the current center frequency</div>
<div class="tag" style="left:649.5px;top:735px;width:48px;height:27.5px">STATUS</div>
<svg class="abs" style="left:699px;top:739px" width="20" height="20" viewBox="0 0 20 20"><circle cx="9.6" cy="9.3" r="9.2" fill="url(#rx)"/><path d="M5.6 5.3 L13.6 13.3 M13.6 5.3 L5.6 13.3" stroke="#fff" stroke-width="2.6"/></svg>
<div class="abs" style="left:721px;top:739px;font-size:16.3px;line-height:18px;color:#111;white-space:nowrap">RF Alignment Failure</div>
</body></html>
